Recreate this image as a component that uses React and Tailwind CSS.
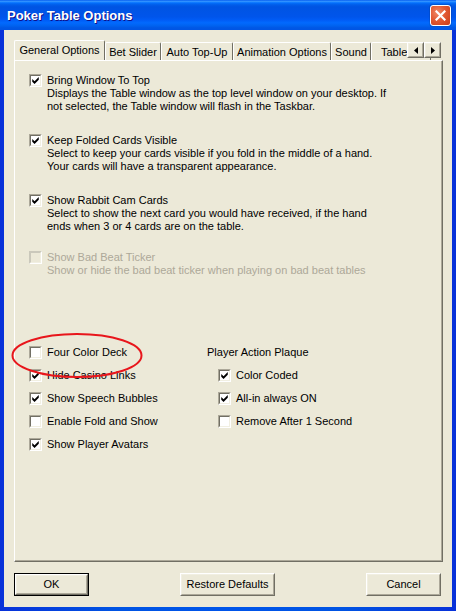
import React from "react";

function Box({ checked, disabled }) {
  const outer = disabled
    ? "border-t-[#cac8bb] border-l-[#cac8bb] border-b-white border-r-white"
    : "border-t-[#aca899] border-l-[#aca899] border-b-white border-r-white";
  const inner = disabled
    ? "border-t-[#cac8bb] border-l-[#cac8bb] border-b-[#f1efe2] border-r-[#f1efe2] bg-[#ece9d8]"
    : "border-t-[#716f64] border-l-[#716f64] border-b-[#f1efe2] border-r-[#f1efe2] bg-white";
  return (
    <span className={`flex w-[13px] h-[13px] shrink-0 border ${outer}`}>
      <span className={`flex-1 flex items-center justify-center border ${inner}`}>
        {checked && (
          <svg width="7" height="7" viewBox="0 0 7 7.5" className="block">
            <path d="M0 2.2 L2.5 4.6 L7 0.1 L7 3 L2.5 7.5 L0 5.1 Z" fill="#000" />
          </svg>
        )}
      </span>
    </span>
  );
}

function Check({ checked, disabled, label }) {
  return (
    <div className="flex items-center h-[13px]">
      <Box checked={checked} disabled={disabled} />
      <span className={`ml-[5px] leading-[13px] whitespace-nowrap ${disabled ? "text-[#aca899]" : ""}`}>
        {label}
      </span>
    </div>
  );
}

function Option({ checked, disabled, label, lines, className }) {
  return (
    <div className={className}>
      <Check checked={checked} disabled={disabled} label={label} />
      <div className={`pl-[18px] leading-[13px] ${disabled ? "text-[#aca899]" : ""}`}>
        {lines.map((l) => (
          <div key={l} className="whitespace-nowrap h-[13px]">
            {l}
          </div>
        ))}
      </div>
    </div>
  );
}

function Btn({ children, def }) {
  return (
    <div className={`h-[23px] flex ${def ? "border border-black" : ""}`}>
      <div className="flex-1 flex border border-t-white border-l-white border-b-[#716f64] border-r-[#716f64]">
        <div className="flex-1 flex items-center justify-center border border-t-[#f1efe2] border-l-[#f1efe2] border-b-[#aca899] border-r-[#aca899] bg-[#ece9d8] leading-[13px]">
          {children}
        </div>
      </div>
    </div>
  );
}

export default function App() {
  const tabs = [
    { label: "Bet Slider", w: "w-[56px] justify-center" },
    { label: "Auto Top-Up", w: "w-[72px] justify-center" },
    { label: "Animation Options", w: "w-[98px] justify-center" },
    { label: "Sound", w: "w-[40px] justify-center" },
    { label: "Table", w: "w-[60px] justify-start pl-[9px]" },
  ];
  return (
    <div className="relative w-[456px] h-[611px] flex flex-col bg-[linear-gradient(90deg,#0831d9,#0054e3_25%,#0055ea_50%,#0054e3_75%,#0831d9)] font-['Liberation_Sans',Arial,sans-serif] text-[11px] text-black overflow-hidden">
      {/* Title bar */}
      <div className="h-[30px] shrink-0 flex items-center pl-[7px] pr-[5px] bg-[linear-gradient(180deg,#0058ee_0%,#3593ff_4%,#288eff_6%,#127dff_8%,#036ffc_10%,#0262ee_14%,#0057e5_20%,#0054e3_24%,#0055eb_56%,#005bf5_66%,#026afe_76%,#0062ef_86%,#0058e6_92%,#0054e3_100%)]">
        <span className="flex-1 text-white font-bold text-[13px] leading-[16px] mt-[2px] [text-shadow:1px_1px_0_#0f1089]">
          Poker Table Options
        </span>
        <div className="w-[21px] h-[21px] mt-[1px] rounded-[3px] border border-white bg-[radial-gradient(circle_at_35%_35%,#f08a68,#e25a33_45%,#c83c18)] flex items-center justify-center shadow-[0_0_0_1px_rgba(0,0,0,0.1)]">
          <svg width="11" height="11" viewBox="0 0 11 11">
            <path d="M1.5 1.5 L9.5 9.5 M9.5 1.5 L1.5 9.5" stroke="#fff" strokeWidth="2.2" strokeLinecap="square" />
          </svg>
        </div>
      </div>

      {/* Body */}
      <div className="flex-1 mx-[4px] mb-[4px] bg-[#ece9d8] pt-[10px] pl-[10px] pr-[9px] flex flex-col">
        {/* Tabs */}
        <div className="relative h-[20px] flex items-end overflow-hidden">
          <div className="relative z-10 w-[91px] shrink-0 h-[21px] -mb-[1px] flex items-center justify-center bg-[#ece9d8] border-l border-t border-r border-l-white border-t-white border-r-[#716f64] rounded-t-[2px] leading-[13px] pb-[1px]">
            General Options
          </div>
          {tabs.map((t) => (
            <div
              key={t.label}
              className={`${t.w} shrink-0 h-[18px] flex items-center border-l border-t border-r border-l-white border-t-white border-r-[#716f64] rounded-t-[2px] leading-[13px] pt-[1px] whitespace-nowrap overflow-hidden`}
            >
              {t.label}
            </div>
          ))}
          <div className="absolute right-[2px] top-[2px] flex z-20">
            {["l", "r"].map((d) => (
              <div key={d} className="w-[17px] h-[16px] flex border border-t-white border-l-white border-b-[#716f64] border-r-[#716f64]">
                <div className="flex-1 flex items-center justify-center bg-[#ece9d8] border border-t-[#f1efe2] border-l-[#f1efe2] border-b-[#aca899] border-r-[#aca899]">
                  <svg width="4" height="7" viewBox="0 0 4 7">
                    {d === "l" ? <path d="M4 0 L0 3.5 L4 7 Z" fill="#000" /> : <path d="M0 0 L4 3.5 L0 7 Z" fill="#000" />}
                  </svg>
                </div>
              </div>
            ))}
          </div>
        </div>

        {/* Panel */}
        <div className="w-[429px] h-[502px] shrink-0 border border-t-white border-l-white border-b-[#716f64] border-r-[#716f64] shadow-[inset_-1px_-1px_0_#aca899] pl-[14px] pt-[13px]">
          <Option
            checked
            label="Bring Window To Top"
            lines={[
              "Displays the Table window as the top level window on your desktop. If",
              "not selected, the Table window will flash in the Taskbar.",
            ]}
          />
          <Option
            className="mt-[21px]"
            checked
            label="Keep Folded Cards Visible"
            lines={[
              "Select to keep your cards visible if you fold in the middle of a hand.",
              "Your cards will have a transparent appearance.",
            ]}
          />
          <Option
            className="mt-[21px]"
            checked
            label="Show Rabbit Cam Cards"
            lines={[
              "Select to show the next card you would have received, if the hand",
              "ends when 3 or 4 cards are on the table.",
            ]}
          />
          <Option
            className="mt-[18px]"
            disabled
            label="Show Bad Beat Ticker"
            lines={["Show or hide the bad beat ticker when playing on bad beat tables"]}
          />

          <div className="mt-[64px] flex">
            <div className="w-[178px] flex flex-col">
              <div className="h-[23px] flex items-center"><Check label="Four Color Deck" /></div>
              <div className="h-[23px] flex items-center"><Check checked label="Hide Casino Links" /></div>
              <div className="h-[23px] flex items-center"><Check checked label="Show Speech Bubbles" /></div>
              <div className="h-[23px] flex items-center"><Check label="Enable Fold and Show" /></div>
              <div className="h-[23px] flex items-center"><Check checked label="Show Player Avatars" /></div>
            </div>
            <div className="flex flex-col">
              <div className="h-[23px] flex items-center leading-[13px]">Player Action Plaque</div>
              <div className="h-[23px] flex items-center pl-[11px]"><Check checked label="Color Coded" /></div>
              <div className="h-[23px] flex items-center pl-[11px]"><Check checked label="All-in always ON" /></div>
              <div className="h-[23px] flex items-center pl-[11px]"><Check label="Remove After 1 Second" /></div>
            </div>
          </div>
        </div>

        {/* Buttons */}
        <div className="mt-[11px] mr-[2px] flex justify-between">
          <div className="w-[75px]"><Btn def>OK</Btn></div>
          <div className="w-[95px]"><Btn>Restore Defaults</Btn></div>
          <div className="w-[75px]"><Btn>Cancel</Btn></div>
        </div>
      </div>

      {/* Red annotation ellipse */}
      <svg className="absolute left-0 top-0 pointer-events-none" width="456" height="611" viewBox="0 0 456 611">
        <ellipse cx="77" cy="355.5" rx="64.5" ry="21.5" fill="none" stroke="#e8161c" strokeWidth="2" />
      </svg>
    </div>
  );
}
